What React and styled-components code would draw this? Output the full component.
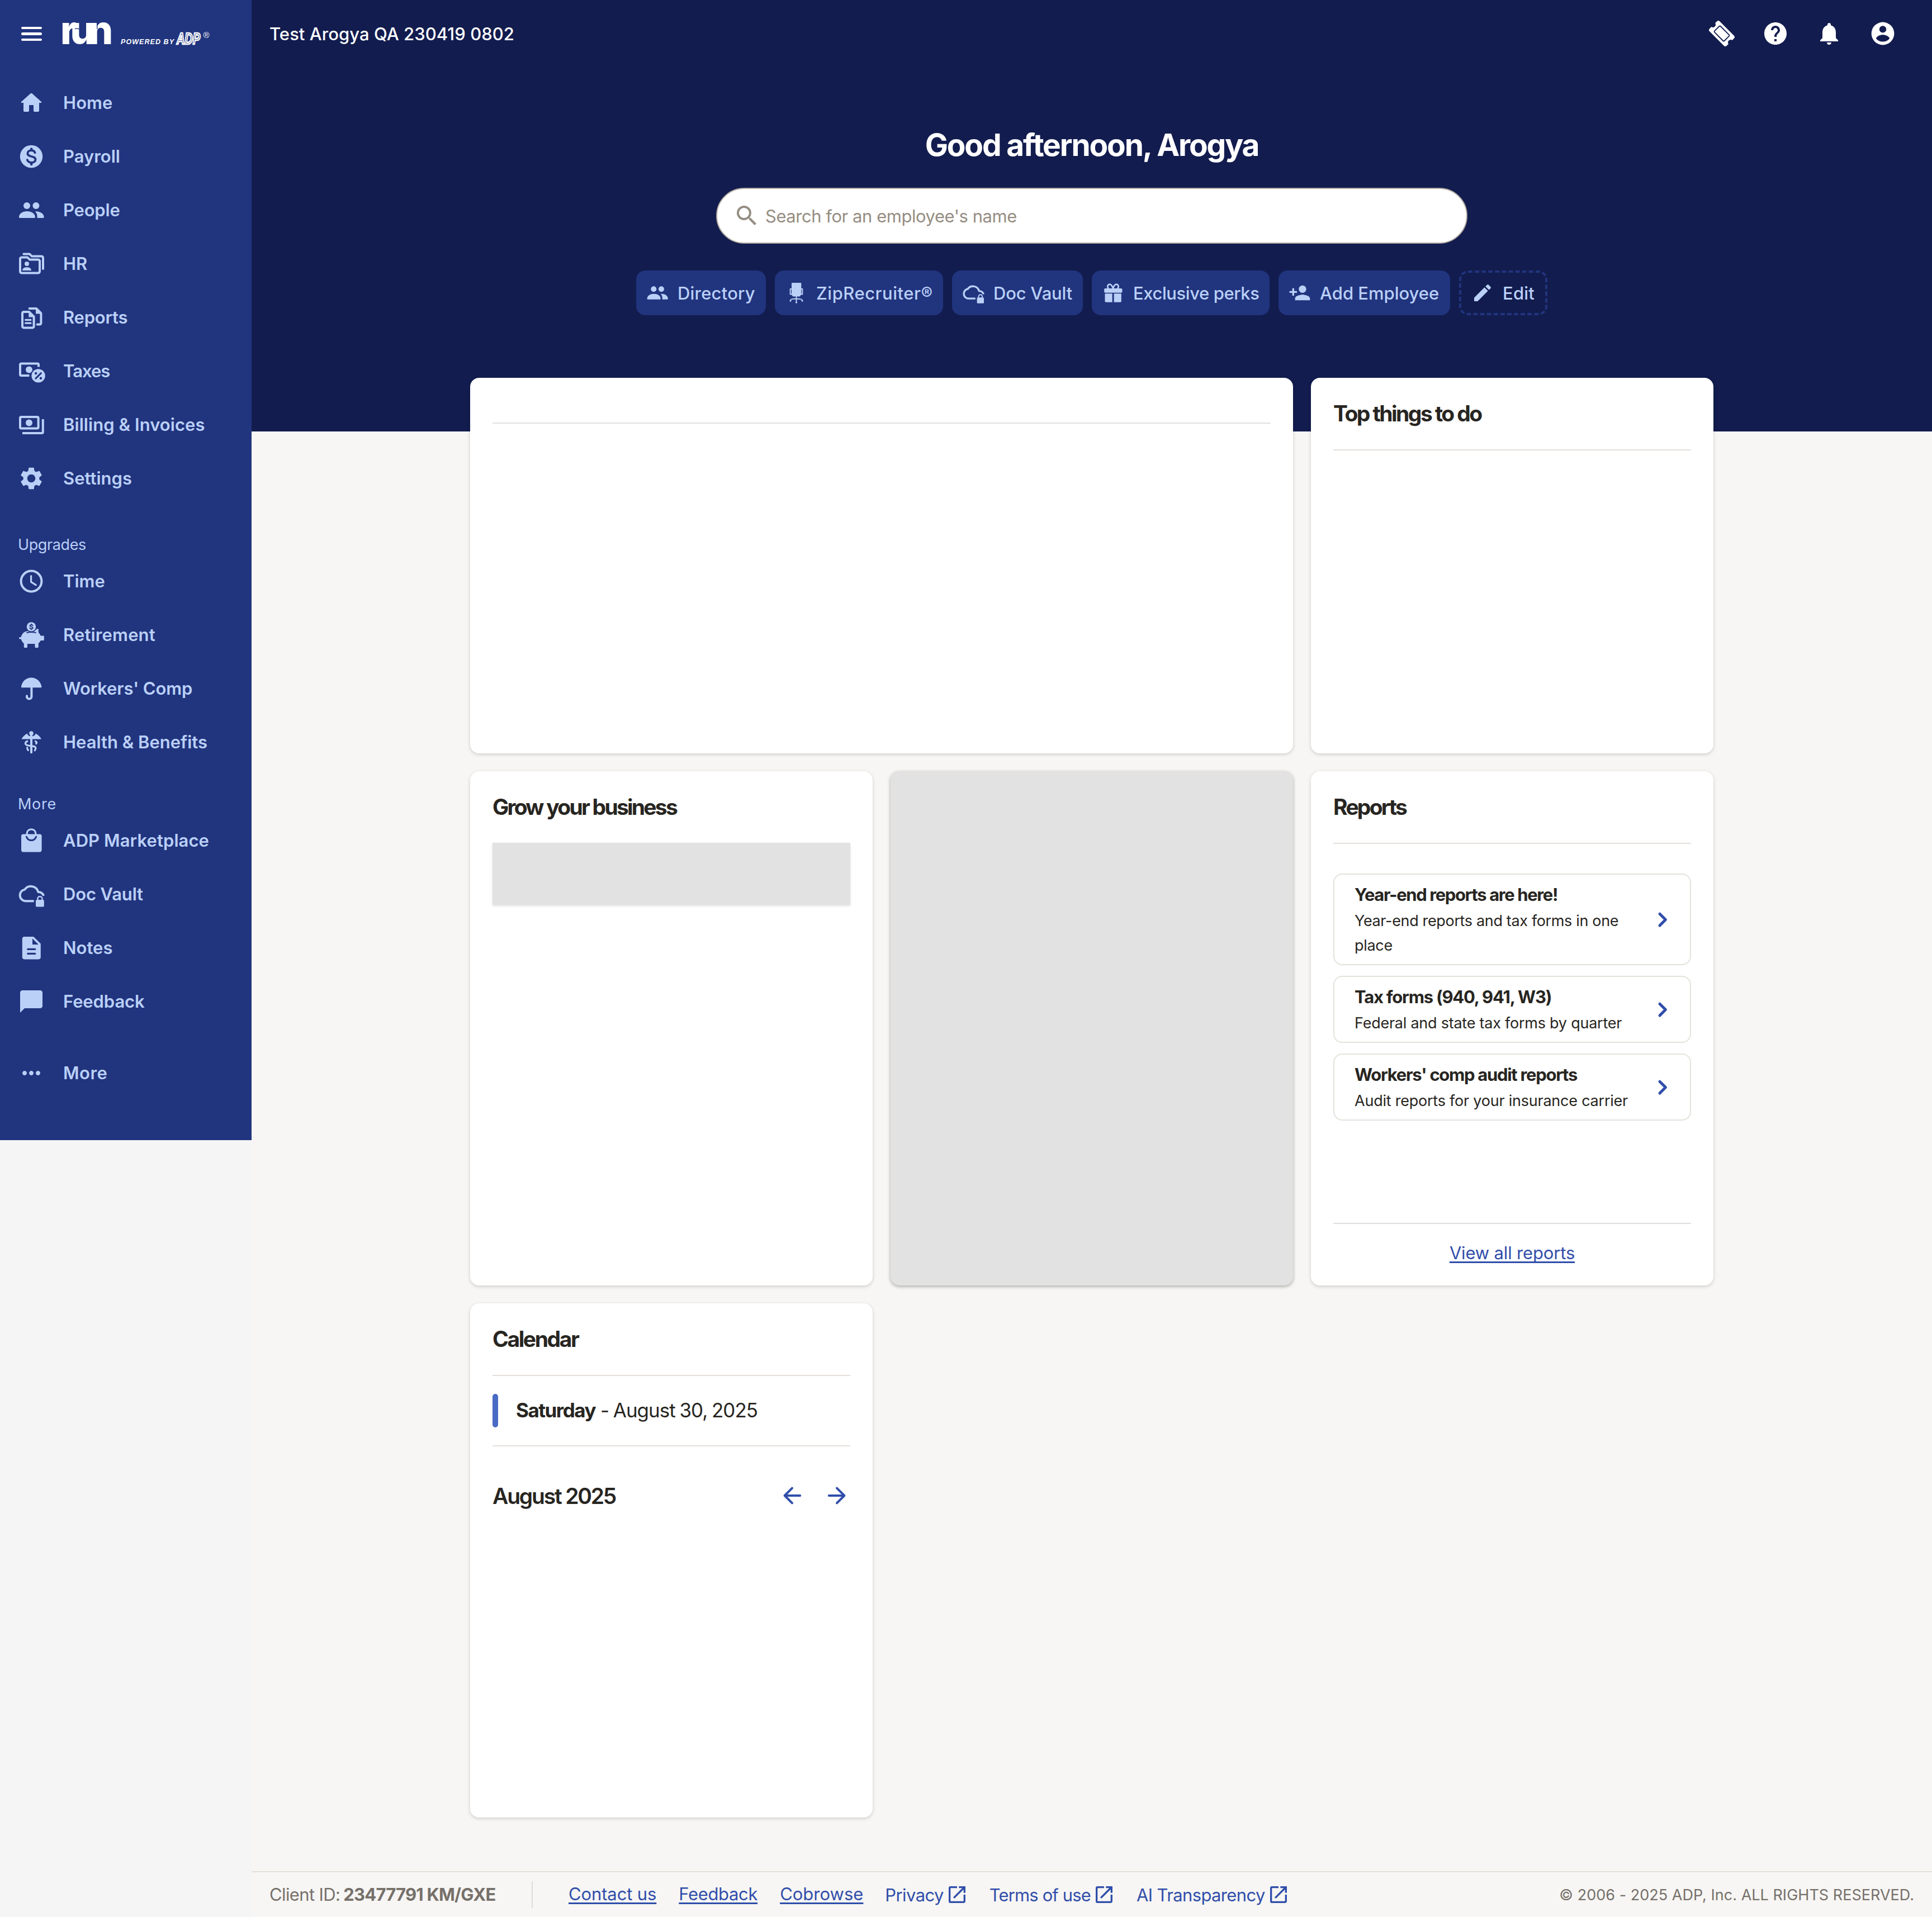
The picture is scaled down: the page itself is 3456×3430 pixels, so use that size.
import React from "react";
import styled, { createGlobalStyle } from "styled-components";
import { MdSettings, MdMoreHoriz, MdHelp, MdNotifications, MdPersonAdd, MdEdit, MdSearch, MdOpenInNew, MdChatBubble } from "react-icons/md";

const c = {
  navy: "#121c4e",
  blue: "#21347e",
  sky: "#bad0f7",
  page: "#f7f6f4",
  ink: "#272521",
  link: "#304eaa",
  rule: "#e3dfdc",
  muted: "#76706a",
};

/* letter spacing, in pixels, for each run of text */
const TRACKING = {
  Home: 0.03, Payroll: 0, People: -0.2, HR: -0.11, Reports: -0.24, Taxes: -1, "Billing & Invoices": 0.06, Settings: 0.02,
  Upgrades: -0.4, Time: 0, Retirement: 0.15, "Workers' Comp": -0.15, "Health & Benefits": -0.02, moreLabel: 0.73,
  "ADP Marketplace": 0.08, "Doc Vault": -0.15, Notes: 0, Feedback: -0.1, More: 0.47,
  company: 0.05, greeting: -2.15, search: -0.46, Directory: 0.2, "ZipRecruiter®": 0.5, chipVault: -0.18,
  "Exclusive perks": -0.42, "Add Employee": -0.01, Edit: 0.2,
  "Top things to do": -2.55, "Grow your business": -2.75, reportsTitle: -2.75, Calendar: -2.4, "August 2025": -2.2,
  r1: -1.38, d1: -0.35, place: -0.3, r2: -1.23, d2: -0.24, r3: -1.3, d3: -0.23, "View all reports": -0.16,
  Saturday: -1.5, date: -1.03, "Client ID:": -0.62, clientNo: -0.8, "Contact us": -0.12, footFeedback: -0.35,
  Cobrowse: 0, Privacy: -0.6, "Terms of use": -0.87, "AI Transparency": -0.63, copy: 0.02,
};

const Global = createGlobalStyle`
  * { box-sizing: border-box; }
  body { margin: 0; background: ${c.page}; font-family: Inter, "Liberation Sans", sans-serif; color: ${c.ink}; }
  h1, h2, p { margin: 0; }
`;

const Tracked = styled.span`
  letter-spacing: ${(p) => p.$track || 0}px;
  white-space: nowrap;
`;
const Txt = ({ id, children }) => <Tracked $track={TRACKING[id || children]}>{children}</Tracked>;

/* ---------- icons ---------- */
const Glyph = styled.svg.attrs({ viewBox: "0 0 24 24" })`
  width: ${(p) => p.$size || 48}px;
  height: ${(p) => p.$size || 48}px;
  flex: none;
  display: block;
  fill: currentColor;
  overflow: visible;
  .s { fill: none; stroke: currentColor; stroke-width: 2; stroke-linecap: round; stroke-linejoin: round; }
  .butt { stroke-linecap: butt; }
  .thin { stroke-width: 1.6; }
  .fine { stroke-width: 1.2; }
  .heavy { stroke-width: 2.5; }
  .cut { fill: none; stroke: ${(p) => p.$bg || c.blue}; stroke-linecap: round; stroke-linejoin: round; }
  .hole { fill: ${(p) => p.$bg || c.blue}; }
`;
const Home = () => (
  <Glyph><path d="M10 19v-5h4v5c0 .55.45 1 1 1h3c.55 0 1-.45 1-1v-7h1.7c.46 0 .68-.57.33-.87L12.67 3.6c-.38-.34-.96-.34-1.34 0l-8.36 7.53c-.34.3-.13.87.33.87H5v7c0 .55.45 1 1 1h3c.55 0 1-.45 1-1z" /></Glyph>
);
const Payroll = () => (
  <Glyph><circle cx="12" cy="12" r="10.1" /><path className="cut" strokeWidth="1.9" d="M15.3 8.6C14.8 7.3 13.6 6.6 12.1 6.6c-1.9 0-3.4 1-3.4 2.6 0 3.7 7 1.9 7 5.5 0 1.7-1.6 2.7-3.6 2.7-1.8 0-3.2-.8-3.7-2.4" /><path className="cut" strokeWidth="2.2" d="M12.1 5.2v1.200M12.100 17.800v1.200" /></Glyph>
);
const People = ({ size }) => (
  <Glyph $size={size}>
    <circle cx="8" cy="8" r="3" /><circle cx="16.2" cy="8" r="3" />
    <path d="M1 18c0-3 3.500-5 7.200-5s7.200 2 7.200 5v.5a.5.5 0 0 1-.5.5H1.500a.5.5 0 0 1-.5-.5z" />
    <path d="M15.500 13.100C19.500 12.800 23.300 15 23.300 18v.5a.5.5 0 0 1-.5.5h-5.500v-1.500c0-1.800-.8-3.200-1.800-4.400z" />
  </Glyph>
);
const Folder = () => (
  <Glyph>
    <path className="s" d="M3.500 6.200h5l2 2H18a1.500 1.500 0 0 1 1.500 1.500v9.100a1.500 1.500 0 0 1-1.500 1.500H3.500A1.500 1.500 0 0 1 2 18.800V7.700a1.500 1.500 0 0 1 1.500-1.500z" />
    <path className="s" d="M5.200 3.200h5.200l2 2H21A1.500 1.500 0 0 1 22.500 6.700v9.800" />
    <circle cx="8" cy="12" r="2" /><path d="M4 18c0-2 1.700-2.900 4-2.900s4 .9 4 2.900z" />
  </Glyph>
);
const Docs = () => (
  <Glyph>
    <path className="s" d="M5.200 7H10l4.300 4.200V20a1.200 1.200 0 0 1-1.200 1.200H5.200A1.200 1.200 0 0 1 4 20V8.200A1.200 1.200 0 0 1 5.200 7z" />
    <path d="M9.700 7v4.700h5z" /><path className="s thin" d="M6.800 14.200h4.700M6.800 17.100h4.700" />
    <path className="s" d="M10.300 4h6.200l4.200 4.200v8.900a1.200 1.200 0 0 1-1.200 1.200h-2.200" /><path d="M16 4v4.800h5z" />
  </Glyph>
);
const Taxes = () => (
  <Glyph>
    <path className="s butt" d="M10.200 16H3a1 1 0 0 1-1-1V6.200a1 1 0 0 1 1-1h14.500a1 1 0 0 1 1 1v2" />
    <circle cx="10" cy="10.700" r="3" /><circle cx="18.300" cy="16.200" r="7" className="hole" /><circle cx="18.300" cy="16.200" r="6.100" />
    <path className="cut" strokeWidth="1.500" d="M15.900 18.600l4.800-4.800" /><circle className="hole" cx="16.100" cy="14" r="1.100" /><circle className="hole" cx="20.500" cy="18.400" r="1.100" />
  </Glyph>
);
const Billing = () => (
  <Glyph><rect className="s" x="2" y="5" width="16.300" height="10.300" rx="1" /><circle cx="10" cy="10.200" r="3" /><path className="s butt" d="M22.400 7v11.500a1 1 0 0 1-1 1H4" /></Glyph>
);
const Clock = () => (
  <Glyph><circle className="s" cx="12" cy="12" r="9.200" /><path className="s thin" d="M11.800 7.300v5.400l4.300 2.600" /></Glyph>
);
const Piggy = () => (
  <Glyph>
    <path d="M8.500 8.600h6.500c1-1.300 2-2 2.900-2.100.3 0 .5.200.5.500v2.900c.9.800 1.500 1.800 1.900 2.900h2.500c.4 0 .6.200.6.600v3c0 .4-.2.600-.6.600h-2.400c-.5 1-1.200 1.900-2 2.500v3.100c0 .5-.4.900-.9.900h-1.400c-.5 0-.9-.4-.9-.9v-2.600H8.500v2.600c0 .5-.4.900-.9.900H6.300c-.5 0-.9-.4-.9-.9v-3c-1.300-1-2.200-2.300-2.500-3.900H1.900c-1.200 0-1.200-1.700 0-1.700h.9c.6-3 2.800-5.100 5.700-5.400z" />
    <circle className="hole" cx="12" cy="4.700" r="4.900" /><path className="cut" strokeWidth=".9" d="M8 10.100q4-1.200 8 0" /><circle cx="12" cy="4.700" r="4.100" />
    <path className="cut" strokeWidth=".9" d="M13.300 3.500c-.5-.7-2.600-.7-2.600.3 0 1.200 2.700.6 2.700 1.900 0 1-2.200 1-2.800.2M12 2.300v.6M12 6.500v.7" />
  </Glyph>
);
const Umbrella = () => (
  <Glyph><path d="M3 10.300C3.600 5.600 7.300 2.200 12 2.200s8.500 3.400 9.200 8.100c.1.500-.1.800-.6.800H3.500c-.4 0-.6-.3-.5-.8z" /><path className="s" d="M12.200 10v9.200a2.100 2.100 0 0 1-4.200 0v-.6" /></Glyph>
);
const Caduceus = () => (
  <Glyph>
    <circle cx="12" cy="4" r="1.900" /><path d="M11 5h2v16.100a1 1 0 0 1-2 0z" />
    <path d="M3.300 9c1.200-1.900 3-3.700 5-4.700.5 1.500 1.600 2.200 3 2.400v2.600H3.500c-.2 0-.3-.2-.2-.3zM20.900 9c-1.200-1.900-3-3.700-5-4.700-.5 1.500-1.600 2.200-3 2.400v2.600h7.700c.3 0 .4-.2.300-.3z" />
    <path className="s thin" d="M8.400 11.200c-2 .6-2.200 2.500-.6 3.300 2.500 1.300 8.100.3 8.100 2.700 0 .9-.3 1.200-.8 2.200M15.700 11.200c1.300.5 1.400 1.500.6 2.100M8.300 16.900c0 .9.300 1.600.9 2.300" />
  </Glyph>
);
const Bag = () => (
  <Glyph>
    <rect x="3" y="6.200" width="18.300" height="16" rx="1.800" />
    <path className="cut" strokeWidth="1.500" d="M7.700 8.600c.8 2.200 2.400 3.200 4.300 3.200s3.500-1 4.300-3.200" />
    <path className="s thin" d="M8 6.200c0-2.700 1.700-4.300 4-4.300s4 1.600 4 4.300c-.7 1.700-2.200 2.400-4 2.400s-3.300-.7-4-2.400z" />
    <path className="hole" d="M9.200 5.600c.3-1.700 1.400-2.700 2.800-2.700s2.500 1 2.800 2.700c-.8.500-4.800.5-5.600 0z" />
  </Glyph>
);
const Vault = ({ size }) => (
  <Glyph $size={size}>
    <path className="s butt" d="M14.300 18.100H6.600A5.200 5.200 0 0 1 6.100 7.800 6.800 6.800 0 0 1 18.200 10c2.500 0 4 1.100 4.900 3.400" />
    <rect x="16" y="17" width="7.400" height="6.300" rx=".9" /><path className="s fine" d="M17.700 17.500V16a2 2 0 0 1 4 0v1.500" />
  </Glyph>
);
const Notes = () => (
  <Glyph><path d="M5.800 2H14l6.400 6.300v12a1.900 1.900 0 0 1-1.900 1.900H5.800A1.900 1.900 0 0 1 3.900 20.300V3.900A1.900 1.900 0 0 1 5.800 2z" /><path className="hole" d="M13 3.600V9h5.400z" /><path className="cut" strokeWidth="1.700" d="M8.900 13.200h6.400M8.900 17.200h6.400" /></Glyph>
);
const Ticket = () => (
  <Glyph $bg={c.navy}><g transform="rotate(45 12 12)">
    <path d="M3 5.600h18a1.800 1.800 0 0 1 1.800 1.800v2.200a2.450 2.450 0 0 0 0 4.800v2.200a1.800 1.800 0 0 1-1.800 1.800H3a1.800 1.800 0 0 1-1.800-1.800v-2.200a2.450 2.450 0 0 0 0-4.800V7.400A1.800 1.800 0 0 1 3 5.600z" />
    <rect className="cut" strokeWidth=".9" x="5.800" y="8.200" width="12.400" height="7.600" rx=".8" />
  </g></Glyph>
);
const Account = () => (
  <Glyph $bg={c.navy}><circle cx="12" cy="12" r="10.200" /><circle className="hole" cx="12" cy="8.200" r="3.100" /><path className="hole" d="M5.900 16.200c1.200-2 3.500-3.100 6.100-3.100s4.900 1.100 6.100 3.100c-1.400 2-3.600 3.100-6.100 3.100s-4.700-1.100-6.100-3.100z" /></Glyph>
);
const Chair = () => (
  <Glyph $size={40}><rect x="7.200" y="1.200" width="10.400" height="12.800" rx=".8" /><path className="s fine" d="M7.400 7.800H5.800v5.700h1.600M17.200 7.800h1.600v5.700h-1.600M12.300 15.600v6.500M6 20c0-1 2-1.700 6.300-1.700s6.300.7 6.300 1.700" /><path d="M7 13.500h10.600l-1.500 2.400H8.500z" /><circle cx="6" cy="20.500" r=".9" /><circle cx="12.300" cy="22.300" r=".9" /><circle cx="18.600" cy="20.500" r=".9" /></Glyph>
);
const Gift = () => (
  <Glyph $size={40}><rect x="2.500" y="7.200" width="19.400" height="4.600" rx="1.200" /><path d="M3.300 12.700h7.900v9.300H4.300a1 1 0 0 1-1-1zM13 12.700h7.900V21a1 1 0 0 1-1 1H13z" /><path className="s thin" d="M12 7.200C10.900 4 9.800 2.800 8.400 2.800 6 2.800 5.700 6 7 7.400M12 7.200C13.100 4 14.200 2.800 15.600 2.800 18 2.800 18.300 6 17 7.400" /></Glyph>
);
const Chevron = () => (
  <Glyph><path className="s heavy" d="M10 6.100 15.200 11.300 10 16.500" /></Glyph>
);
const Arrow = ({ back }) => (
  <Glyph><path className="s" transform={back ? undefined : "rotate(180 12 12)"} d="M19.100 12H5.300M12 5.300 5.300 12l6.700 6.700" /></Glyph>
);

const LogoArt = styled.svg`
  display: block;
  width: 270px;
  height: 60px;
  overflow: visible;
  fill: #fff;
  .run { font: 800 70px Inter, sans-serif; letter-spacing: -12px; }
  .seam { fill: none; stroke: ${c.blue}; stroke-width: 1.3px; }
  .by { font: italic 700 12.5px "Liberation Sans", sans-serif; }
  .adp { font: italic 700 29px "Liberation Sans", sans-serif; fill: ${c.blue}; stroke: #fff; stroke-width: 2.6px; }
  .reg { font: 400 14px "Liberation Sans", sans-serif; }
`;
const Logo = () => (
  <LogoArt viewBox="0 0 270 60">
    <text className="run" x="-4" y="49">run</text>
    <path className="seam" d="M22 21.500q7-1.500 12.500 3M61.800 10v12" />
    <text className="by" x="104" y="49" textLength="95">POWERED BY</text>
    <text className="adp" x="204" y="48.500" textLength="42" lengthAdjust="spacingAndGlyphs">ADP</text>
    <text className="reg" x="251.500" y="38" textLength="11" lengthAdjust="spacingAndGlyphs">®</text>
  </LogoArt>
);

/* ---------- layout ---------- */
const Page = styled.div`
  display: flex;
  width: 3456px;
  height: 3430px;
`;
const SideColumn = styled.div`
  width: 450px;
  flex: none;
  background: #f5f5f5;
`;
const Sidebar = styled.nav`
  height: 2040px;
  background: ${c.blue};
  color: ${c.sky};
`;
const Brand = styled.div`
  display: flex;
  gap: 32px;
  height: 136px;
  padding: 30px 0 0 32px;
  color: #fff;
`;
const Burger = styled.div`
  width: 48px;
  height: 61px;
  display: flex;
  flex-direction: column;
  align-items: center;
  justify-content: center;
  gap: 6px;
  i { width: 37px; height: 4.5px; border-radius: 3px; background: #fff; }
`;
const NavItem = styled.div`
  display: flex;
  align-items: center;
  gap: 33px;
  height: 96px;
  padding-left: 32px;
  margin-top: ${(p) => p.$gap || 0}px;
  font-size: 31px;
  font-weight: 600;
  span { padding-bottom: 1px; }
`;
const NavLabel = styled.div`
  height: ${(p) => 36 + p.$gap}px;
  padding: ${(p) => p.$gap + 1}px 0 0 32px;
  font-size: 27px;
  line-height: 36px;
`;
const Main = styled.main`
  flex: 1;
  display: flex;
  flex-direction: column;
`;
const Hero = styled.header`
  height: 772px;
  flex: none;
  background: ${c.navy};
  color: #fff;
  display: flex;
  flex-direction: column;
  align-items: center;
`;
const TopBar = styled.div`
  align-self: stretch;
  display: flex;
  align-items: center;
  justify-content: space-between;
  height: 120px;
  padding: 0 64px 0 32px;
  font-size: 31px;
  font-weight: 500;
`;
const TopIcons = styled.div`
  display: flex;
  gap: 48px;
`;
const Greeting = styled.h1`
  margin-top: 103px;
  height: 73px;
  line-height: 72px;
  font-size: 55px;
  font-weight: 700;
`;
const Search = styled.div`
  display: flex;
  align-items: center;
  gap: 9px;
  width: 1344px;
  height: 100px;
  margin-top: 40px;
  padding-left: 29px;
  border: 2px solid #afa8a0;
  border-radius: 50px;
  background: #fff;
  color: #958d82;
  font-size: 31px;
`;
const Chips = styled.div`
  display: flex;
  gap: 16px;
  margin-top: 48px;
`;
const Chip = styled.div`
  display: flex;
  align-items: center;
  gap: 16px;
  width: ${(p) => p.$w}px;
  height: 80px;
  padding-left: 18px;
  border-radius: 16px;
  color: ${c.sky};
  background: ${(p) => (p.$dashed ? "none" : c.blue)};
  border: ${(p) => (p.$dashed ? `4px dashed ${c.blue}` : "0")};
  font-size: 31px;
  font-weight: 500;
`;
const Grid = styled.div`
  display: grid;
  grid-template-columns: repeat(3, 720px);
  grid-template-rows: 672px 920px 920px;
  gap: 32px;
  justify-content: center;
  margin: -96px 0 96px;
`;
const Card = styled.section`
  grid-column: span ${(p) => p.$span || 1};
  display: flex;
  flex-direction: column;
  padding: 40px;
  border-radius: 16px;
  background: ${(p) => (p.$loading ? "#e2e2e2" : "#fff")};
  box-shadow: 0 2px 6px rgba(0, 0, 0, ${(p) => (p.$loading ? 0.32 : 0.17)});
`;
const CardTitle = styled.h2`
  height: ${(p) => (p.$empty ? 42 : 90)}px;
  flex: none;
  line-height: 48px;
  border-bottom: ${(p) => (p.$plain ? 0 : 2)}px solid ${c.rule};
  font-size: 39px;
  font-weight: 700;
`;
const Skeleton = styled.div`
  height: 111px;
  margin-top: -2px;
  background: #e2e2e2;
  box-shadow: 0 2px 4px rgba(0, 0, 0, 0.12);
`;
const ReportList = styled.div`
  display: flex;
  flex-direction: column;
  gap: 19px;
  margin-top: 53px;
`;
const ReportItem = styled.div`
  display: flex;
  align-items: center;
  justify-content: space-between;
  padding: 14px 26px 11px 36px;
  border: 2px solid #e3e2dc;
  border-radius: 16px;
  color: ${c.link};
`;
const ReportText = styled.div`
  color: ${c.ink};
`;
const ReportName = styled.p`
  height: 47px;
  font-size: 31px;
  line-height: 44px;
  font-weight: 700;
`;
const ReportNote = styled.p`
  font-size: 27px;
  line-height: 44px;
`;
const CardFooter = styled.div`
  margin-top: auto;
  height: 72px;
  border-top: 2px solid #dfdfdc;
  padding-top: 30px;
  line-height: 44px;
  text-align: center;
  font-size: 31px;
`;
const Link = styled.a`
  color: ${c.link};
  text-decoration: underline;
  text-decoration-thickness: 3px;
  text-underline-offset: 4px;
  text-decoration-skip-ink: none;
`;
const Today = styled.div`
  display: flex;
  align-items: center;
  gap: 32px;
  height: 126px;
  border-bottom: 2px solid ${c.rule};
  font-size: 35px;
  b { font-weight: 700; }
`;
const TodayMark = styled.i`
  width: 10px;
  height: 60px;
  border-radius: 5px;
  background: #496bc4;
`;
const TodayText = styled.div`
  padding-bottom: 2px;
  word-spacing: -1px;
`;
const Month = styled.div`
  display: flex;
  align-items: center;
  justify-content: space-between;
  height: 48px;
  margin-top: 64px;
  font-size: 39px;
  font-weight: 600;
`;
const MonthNav = styled.div`
  display: flex;
  gap: 32px;
  color: ${c.link};
`;
const Footer = styled.footer`
  display: flex;
  align-items: center;
  height: 82px;
  padding: 0 32px;
  border-top: 2px solid #e2e1d8;
  color: ${c.muted};
  font-size: 31px;
`;
const Client = styled.div`
  display: flex;
  gap: 6px;
  width: 471px;
  height: 48px;
  line-height: 48px;
  border-right: 2px solid #dfddd8;
  b { font-weight: 700; }
`;
const FootLinks = styled.div`
  display: flex;
  gap: 40px;
  margin-left: 64px;
`;
const External = styled.span`
  display: flex;
  align-items: center;
  gap: 4px;
  margin: 0 -1px;
  color: ${c.link};
`;
const Copyright = styled.div`
  margin-left: auto;
  font-size: 27px;
`;

const nav = [["Home", Home], ["Payroll", Payroll], ["People", People], ["HR", Folder], ["Reports", Docs], ["Taxes", Taxes], ["Billing & Invoices", Billing], ["Settings", () => <MdSettings size={48} />]];
const upgrades = [["Time", Clock], ["Retirement", Piggy], ["Workers' Comp", Umbrella], ["Health & Benefits", Caduceus]];
const more = [["ADP Marketplace", Bag], ["Doc Vault", Vault], ["Notes", Notes], ["Feedback", () => <MdChatBubble size={48} />]];
const chips = [
  ["Directory", "Directory", 232, <People size={40} />],
  ["ZipRecruiter®", "ZipRecruiter®", 301, <Chair />],
  ["chipVault", "Doc Vault", 234, <Vault size={40} />],
  ["Exclusive perks", "Exclusive perks", 318, <Gift />],
  ["Add Employee", "Add Employee", 307, <MdPersonAdd size={40} />],
];
const reports = [
  ["Year-end reports are here!", ["Year-end reports and tax forms in one", "place"]],
  ["Tax forms (940, 941, W3)", ["Federal and state tax forms by quarter"]],
  ["Workers' comp audit reports", ["Audit reports for your insurance carrier"]],
];
const navRows = (items) => items.map(([name, Icon]) => <NavItem key={name}><Icon /><Txt>{name}</Txt></NavItem>);

export default function App() {
  return (
    <Page>
      <Global />
      <SideColumn>
        <Sidebar>
          <Brand><Burger><i /><i /><i /></Burger><Logo /></Brand>
          {navRows(nav)}
          <NavLabel $gap={52}><Txt>Upgrades</Txt></NavLabel>
          {navRows(upgrades)}
          <NavLabel $gap={44}><Txt id="moreLabel">More</Txt></NavLabel>
          {navRows(more)}
          <NavItem $gap={32}><MdMoreHoriz size={48} /><Txt>More</Txt></NavItem>
        </Sidebar>
      </SideColumn>
      <Main>
        <Hero>
          <TopBar>
            <Txt id="company">Test Arogya QA 230419 0802</Txt>
            <TopIcons><Ticket /><MdHelp size={48} /><MdNotifications size={48} /><Account /></TopIcons>
          </TopBar>
          <Greeting><Txt id="greeting">Good afternoon, Arogya</Txt></Greeting>
          <Search><MdSearch size={48} /><Txt id="search">Search for an employee's name</Txt></Search>
          <Chips>
            {chips.map(([id, name, w, icon]) => <Chip key={id} $w={w}>{icon}<Txt id={id}>{name}</Txt></Chip>)}
            <Chip $w={158} $dashed><MdEdit size={40} /><Txt>Edit</Txt></Chip>
          </Chips>
        </Hero>
        <Grid>
          <Card $span={2}><CardTitle $empty /></Card>
          <Card><CardTitle><Txt>Top things to do</Txt></CardTitle></Card>
          <Card><CardTitle $plain><Txt>Grow your business</Txt></CardTitle><Skeleton /></Card>
          <Card $loading />
          <Card>
            <CardTitle><Txt id="reportsTitle">Reports</Txt></CardTitle>
            <ReportList>
              {reports.map(([name, lines], i) => (
                <ReportItem key={name}>
                  <ReportText>
                    <ReportName><Txt id={`r${i + 1}`}>{name}</Txt></ReportName>
                    {lines.map((l, j) => <ReportNote key={l}><Txt id={j ? "place" : `d${i + 1}`}>{l}</Txt></ReportNote>)}
                  </ReportText>
                  <Chevron />
                </ReportItem>
              ))}
            </ReportList>
            <CardFooter><Link><Txt>View all reports</Txt></Link></CardFooter>
          </Card>
          <Card>
            <CardTitle><Txt>Calendar</Txt></CardTitle>
            <Today><TodayMark /><TodayText><b><Txt>Saturday</Txt></b> <Txt id="date">- August 30, 2025</Txt></TodayText></Today>
            <Month><Txt>August 2025</Txt><MonthNav><Arrow back /><Arrow /></MonthNav></Month>
          </Card>
        </Grid>
        <Footer>
          <Client><Txt>Client ID:</Txt><b><Txt id="clientNo">23477791 KM/GXE</Txt></b></Client>
          <FootLinks>
            <Link><Txt>Contact us</Txt></Link>
            <Link><Txt id="footFeedback">Feedback</Txt></Link>
            <Link><Txt>Cobrowse</Txt></Link>
            {["Privacy", "Terms of use", "AI Transparency"].map((t) => (
              <External key={t}><Txt>{t}</Txt><MdOpenInNew size={40} /></External>
            ))}
          </FootLinks>
          <Copyright><Txt id="copy">© 2006 - 2025 ADP, Inc. ALL RIGHTS RESERVED.</Txt></Copyright>
        </Footer>
      </Main>
    </Page>
  );
}
